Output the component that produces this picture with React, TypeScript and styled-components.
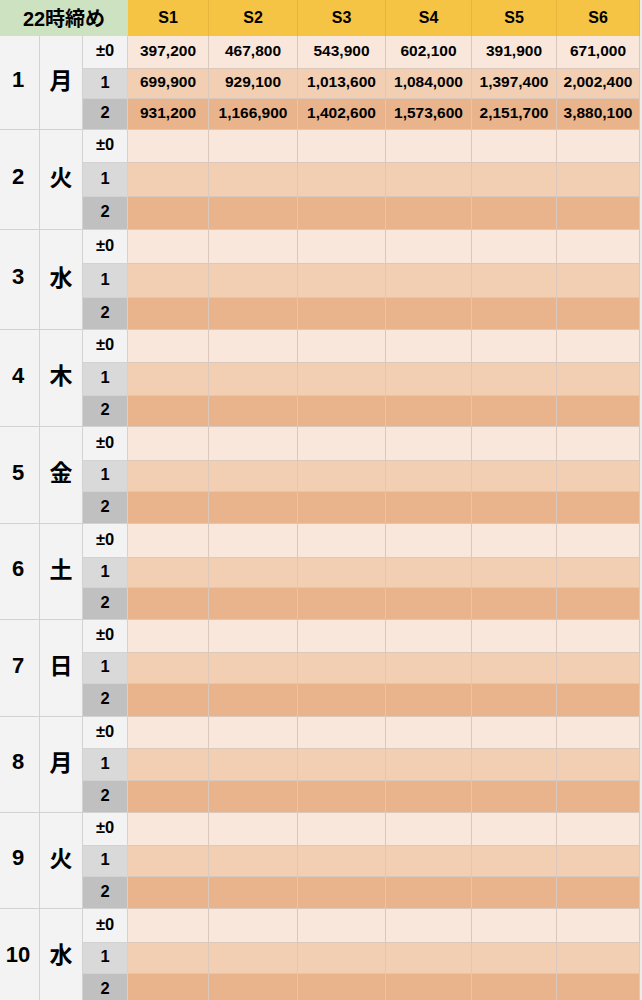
import React from 'react';
import styled, {createGlobalStyle} from 'styled-components';

const GlobalStyle = createGlobalStyle`
  html, body {
    margin: 0;
    padding: 0;
    background: #ececec;
  }
  * {
    box-sizing: border-box;
  }
`

type Tier = 0 | 1 | 2

type DayType = {
    num: number
    weekday: string
    heights: [number, number, number]
    values?: [string[], string[], string[]]
}

const COLUMNS = [40, 43, 45, 81, 89, 88, 86, 85, 83]
const SHOPS = ['S1', 'S2', 'S3', 'S4', 'S5', 'S6']
const TIER_LABELS = ['±0', '1', '2']

const days: DayType[] = [
    {
        num: 1, weekday: '月', heights: [33, 30, 31],
        values: [
            ['397,200', '467,800', '543,900', '602,100', '391,900', '671,000'],
            ['699,900', '929,100', '1,013,600', '1,084,000', '1,397,400', '2,002,400'],
            ['931,200', '1,166,900', '1,402,600', '1,573,600', '2,151,700', '3,880,100'],
        ],
    },
    {num: 2, weekday: '火', heights: [33, 34, 33]},
    {num: 3, weekday: '水', heights: [34, 34, 32]},
    {num: 4, weekday: '木', heights: [33, 33, 31]},
    {num: 5, weekday: '金', heights: [34, 31, 32]},
    {num: 6, weekday: '土', heights: [34, 30, 32]},
    {num: 7, weekday: '日', heights: [33, 31, 33]},
    {num: 8, weekday: '月', heights: [32, 32, 32]},
    {num: 9, weekday: '火', heights: [33, 31, 32]},
    {num: 10, weekday: '水', heights: [34, 31, 32]},
]

const tierLabelBg = ['#f3f3f3', '#d9d9d9', '#c0c0c0']
const tierValueBg = ['#f9e7db', '#f2cfb2', '#e9b48b']

export default function App() {
    const rows = [36, ...days.flatMap(d => d.heights)].map(h => `${h}px`).join(' ')

    return (
        <>
            <GlobalStyle/>
            <Sheet $rows={rows}>
                <TitleCell>22時締め</TitleCell>
                {SHOPS.map(s => <ShopCell key={s}>{s}</ShopCell>)}

                {days.map(day => (
                    <React.Fragment key={day.num}>
                        <DayCell>{day.num}</DayCell>
                        <WeekdayCell>{day.weekday}</WeekdayCell>
                        {TIER_LABELS.map((label, t) => (
                            <React.Fragment key={label}>
                                <TierCell $tier={t as Tier}>{label}</TierCell>
                                {SHOPS.map((s, i) => (
                                    <ValueCell key={s} $tier={t as Tier}>
                                        {day.values ? day.values[t][i] : ''}
                                    </ValueCell>
                                ))}
                            </React.Fragment>
                        ))}
                    </React.Fragment>
                ))}
            </Sheet>
        </>
    )
}

const Sheet = styled.div<{ $rows: string }>`
  display: grid;
  grid-template-columns: ${COLUMNS.map(c => `${c}px`).join(' ')};
  grid-template-rows: ${(props) => props.$rows};
  width: 640px;
  font-family: "Liberation Sans", Arial, "Noto Sans CJK JP", sans-serif;
  font-weight: bold;
  color: #000;
`

const Cell = styled.div`
  display: flex;
  align-items: center;
  justify-content: center;
  padding-bottom: 3px;
  border-right: 1px solid #d2d2d2;
  border-bottom: 1px solid #d2d2d2;
  white-space: nowrap;
  overflow: hidden;
`

const TitleCell = styled(Cell)`
  grid-column: span 3;
  background: #cce2c0;
  font-family: "Liberation Sans", "Noto Sans CJK JP", sans-serif;
  font-size: 20px;
  padding-bottom: 1px;
  border-right: none;
  border-bottom: none;
`

const ShopCell = styled(Cell)`
  background: #f6c444;
  font-size: 16px;
  padding-bottom: 1px;
  border-right-color: #e8b53c;
  border-bottom: none;
`

const DayCell = styled(Cell)`
  grid-row: span 3;
  background: #f3f3f3;
  font-size: 22px;
  padding-right: 3px;
  padding-bottom: 5px;
`

const WeekdayCell = styled(Cell)`
  grid-row: span 3;
  background: #f3f3f3;
  font-family: "Noto Sans CJK JP", sans-serif;
  font-size: 23px;
  padding-bottom: 8px;
`

const TierCell = styled(Cell)<{ $tier: Tier }>`
  background: ${(props) => tierLabelBg[props.$tier]};
  font-size: 16.5px;
`

const ValueCell = styled(Cell)<{ $tier: Tier }>`
  background: ${(props) => tierValueBg[props.$tier]};
  font-size: 15.5px;
  border-color: #d9c8bb;
`
